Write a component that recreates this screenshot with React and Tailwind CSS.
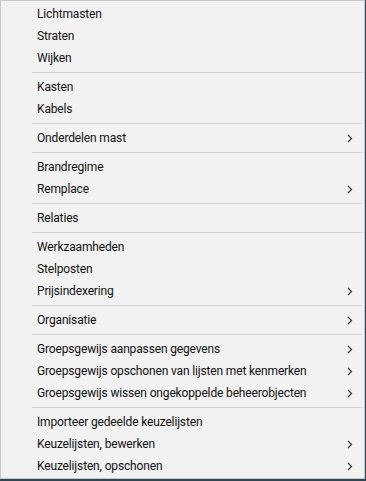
import React from "react";

const groups = [
  [["Lichtmasten"], ["Straten"], ["Wijken"]],
  [["Kasten"], ["Kabels"]],
  [["Onderdelen mast", true]],
  [["Brandregime"], ["Remplace", true]],
  [["Relaties"]],
  [["Werkzaamheden"], ["Stelposten"], ["Prijsindexering", true]],
  [["Organisatie", true]],
  [
    ["Groepsgewijs aanpassen gegevens", true],
    ["Groepsgewijs opschonen van lijsten met kenmerken", true],
    ["Groepsgewijs wissen ongekoppelde beheerobjecten", true],
  ],
  [["Importeer gedeelde keuzelijsten"], ["Keuzelijsten, bewerken", true], ["Keuzelijsten, opschonen", true]],
];

function Chevron() {
  return (
    <svg width="6" height="9" viewBox="0 0 6 9" className="shrink-0">
      <polyline points="1,1 4.5,4.5 1,8" fill="none" stroke="#3c3c3c" strokeWidth="1.3" />
    </svg>
  );
}

export default function App() {
  return (
    <div className="w-[366px] h-[481px] bg-[#2f4650] flex flex-col">
      <div
        className="w-[365px] h-[479px] bg-[#f2f2f2] border border-[#c8c8c8] pt-[2px] flex flex-col text-[12px] tracking-[-0.15px] text-[#111]"
        style={{ fontFamily: 'Roboto, "Noto Sans", sans-serif' }}
      >
        {groups.map((g, gi) => (
          <React.Fragment key={gi}>
            {gi > 0 && (
              <div className="h-[7px] flex items-center pl-[31px] pr-[2px]">
                <div className="h-px w-full bg-[#d4d4d4]" />
              </div>
            )}
            {g.map(([label, sub]) => (
              <div key={label} className="h-[22px] flex items-center pl-[36px] pr-[11px]">
                <span className="flex-1 whitespace-nowrap leading-none">{label}</span>
                {sub && <Chevron />}
              </div>
            ))}
          </React.Fragment>
        ))}
      </div>
    </div>
  );
}
